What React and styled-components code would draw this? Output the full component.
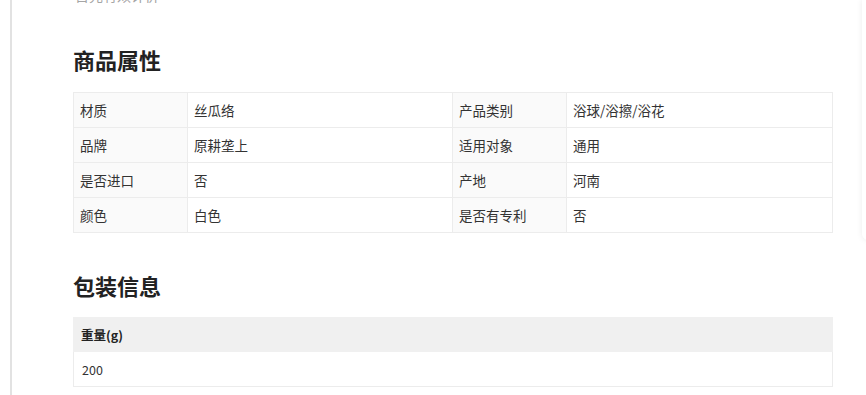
import React from 'react'
import styled, { createGlobalStyle } from 'styled-components'

const GlobalStyle = createGlobalStyle`
    html, body {
        margin: 0;
        padding: 0;
        background: #fff;
        overflow: hidden;
    }
    body {
        font-family: "Noto Sans CJK SC", "Noto Sans", "Liberation Sans", sans-serif;
        color: #333;
    }
`

const attrs = [
    ['材质', '丝瓜络', '产品类别', '浴球/浴擦/浴花'],
    ['品牌', '原耕垄上', '适用对象', '通用'],
    ['是否进口', '否', '产地', '河南'],
    ['颜色', '白色', '是否有专利', '否'],
]

function App() {
    return (
        <>
            <GlobalStyle />
            <Page>
                <Main>
                    <Intro>首先有效计价</Intro>

                    <Title>商品属性</Title>
                    <AttrGrid>
                        {attrs.map((row) =>
                            row.map((text, i) => (
                                <Cell key={row[0] + i} label={i % 2 === 0}>
                                    {text}
                                </Cell>
                            ))
                        )}
                    </AttrGrid>

                    <Title second>包装信息</Title>
                    <PackTable>
                        <HeadRow>重量(g)</HeadRow>
                        <BodyRow>200</BodyRow>
                    </PackTable>
                </Main>
                <SidePanel />
            </Page>
        </>
    )
}

export default App


const Page = styled.div`
    display: flex;
    align-items: flex-start;
    width: 100vw;
    height: 395px;
`

const Main = styled.div`
    flex: 0 0 851px;
    height: 395px;
    margin-left: 10px;
    border-left: 2px solid #e2e2e2;
    box-sizing: border-box;
    padding-left: 61px;
`

const Intro = styled.div`
    margin-top: -15px;
    height: 20px;
    line-height: 20px;
    font-size: 14px;
    color: #a5a5a5;
    padding-left: 2px;
`

const Title = styled.h2`
    margin: ${(p) => (p.second ? '37px 0 17px' : '39px 0 18px')};
    height: 30px;
    line-height: 30px;
    font-size: 22px;
    font-weight: 700;
    color: #222;
`

const AttrGrid = styled.div`
    display: grid;
    grid-template-columns: 114px 265px 114px 1fr;
    width: 760px;
    border-top: 1px solid #ececec;
    border-left: 1px solid #ececec;
    box-sizing: border-box;
`

const Cell = styled.div`
    height: 35px;
    box-sizing: border-box;
    border-right: 1px solid #ececec;
    border-bottom: 1px solid #ececec;
    background: ${(p) => (p.label ? '#fafafa' : '#fff')};
    padding-left: 6px;
    display: flex;
    align-items: center;
    font-size: 13.5px;
    color: #333;
`

const PackTable = styled.div`
    width: 760px;
`

const HeadRow = styled.div`
    height: 35px;
    background: #f0f0f0;
    padding-left: 8px;
    display: flex;
    align-items: center;
    font-size: 12.5px;
    font-weight: 700;
    color: #222;
`

const BodyRow = styled.div`
    height: 35px;
    box-sizing: border-box;
    border: 1px solid #ececec;
    border-top: none;
    padding-left: 8px;
    display: flex;
    align-items: center;
    font-size: 12.5px;
    color: #333;
`

const SidePanel = styled.div`
    flex: 0 0 220px;
    margin-left: 1px;
    height: 240px;
    background: #fff;
    border-bottom-left-radius: 6px;
    box-shadow: 0 0 6px rgba(0, 0, 0, 0.08);
`
